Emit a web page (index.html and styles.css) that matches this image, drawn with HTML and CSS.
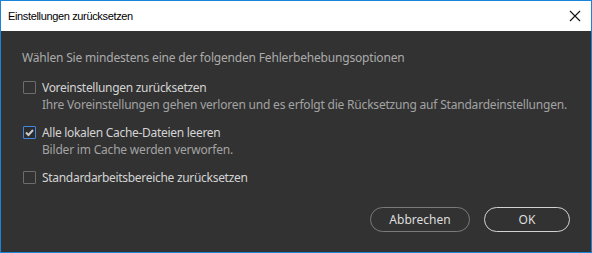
FILE: index.html
```html
<!DOCTYPE html>
<html lang="de">
<head>
<meta charset="utf-8">
<link rel="stylesheet" href="styles.css">
</head>
<body>
<div class="window">
  <div class="titlebar">
    <span class="title">Einstellungen zurücksetzen</span>
    <svg class="close" width="12" height="12" viewBox="0 0 12 12"><path d="M1 1 L11 11 M11 1 L1 11" stroke="#111" stroke-width="1.1" fill="none"/></svg>
  </div>
  <div class="content">
    <p class="intro">Wählen Sie mindestens eine der folgenden Fehlerbehebungsoptionen</p>
    <div class="options">
      <div class="option">
        <span class="box"></span>
        <div class="texts">
          <div class="label">Voreinstellungen zurücksetzen</div>
          <div class="desc">Ihre Voreinstellungen gehen verloren und es erfolgt die Rücksetzung auf Standardeinstellungen.</div>
        </div>
      </div>
      <div class="option">
        <span class="box checked"><svg width="11" height="11" viewBox="0 0 11 11"><path d="M2 5.5 L4.5 8 L9 3" stroke="#c9c9c9" stroke-width="2" fill="none"/></svg></span>
        <div class="texts">
          <div class="label">Alle lokalen Cache-Dateien leeren</div>
          <div class="desc">Bilder im Cache werden verworfen.</div>
        </div>
      </div>
      <div class="option">
        <span class="box"></span>
        <div class="texts">
          <div class="label">Standardarbeitsbereiche zurücksetzen</div>
        </div>
      </div>
    </div>
    <div class="buttons">
      <button class="btn">Abbrechen</button>
      <button class="btn primary">OK</button>
    </div>
  </div>
</div>
</body>
</html>
```
FILE: styles.css
```css
* { box-sizing: border-box; }
html, body { margin: 0; padding: 0; background: #323232; }
body { font-family: "Noto Sans", "Open Sans", sans-serif; font-size: 12px; }
.window {
  width: 592px; height: 253px;
  border: 1px solid #1a84d8;
  display: flex; flex-direction: column;
  background: #323232;
}
.titlebar {
  height: 30px; background: #fff;
  display: flex; align-items: center; justify-content: space-between;
  padding: 0 8px 0 7px;
}
.title { color: #000; font-family: "Liberation Sans", Arial, sans-serif; font-size: 11px; letter-spacing: -0.35px; }
.close { margin-right: 2px; }
.content { flex: 1; padding: 18px 21px 0 21px; display: flex; flex-direction: column; }
.intro { margin: 0; line-height: 17px; color: #ababab; letter-spacing: -0.18px; white-space: nowrap; }
.options { margin-top: 13px; display: flex; flex-direction: column; gap: 11px; }
.option { display: flex; align-items: flex-start; }
.box {
  width: 13px; height: 13px; border: 1px solid #6c6c6c; border-radius: 1px;
  margin: 2px 6px 0 1px; flex: none;
  display: flex; align-items: center; justify-content: center;
}
.box.checked { border-color: #3f87e0; background: #2c2c2c; }
.texts { display: flex; flex-direction: column; }
.label { line-height: 17px; color: #d4d4d4; letter-spacing: -0.3px; white-space: nowrap; }
.desc { line-height: 17px; color: #a3a3a3; letter-spacing: -0.2px; white-space: nowrap; }
.buttons { margin-top: auto; margin-bottom: 20px; display: flex; justify-content: flex-end; gap: 14px; }
.btn {
  font-family: inherit; font-size: 12px; color: #dedede;
  background: transparent; border: 1.5px solid #7a7a7a; border-radius: 13px;
  height: 25px; width: 100px; padding: 0;
}
.btn.primary { width: 86px; border-color: #d2d2d2; }
```
